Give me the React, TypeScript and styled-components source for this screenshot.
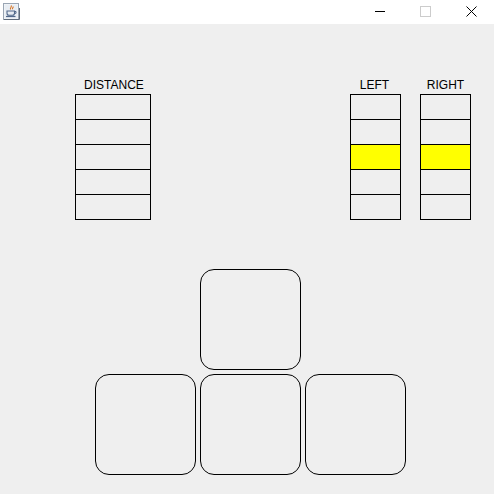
import React from "react";
import styled, { createGlobalStyle } from "styled-components";

const GlobalStyle = createGlobalStyle`
  html, body { margin: 0; padding: 0; background: #efefef; }
  body { font-family: "Liberation Sans", Arial, sans-serif; }
`;

const Frame = styled.div`
  width: 494px;
  height: 494px;
  overflow: hidden;
  display: flex;
  flex-direction: column;
  background: #efefef;
`;

// Window title bar
const TitleBar = styled.div`
  height: 24px;
  flex: none;
  background: #ffffff;
  display: flex;
  align-items: flex-start;
  justify-content: space-between;
`;

const AppIcon = styled.svg`
  width: 17px;
  height: 18px;
  margin: 3px 0 0 3px;
  display: block;
`;

const WindowControls = styled.div`
  display: flex;
  align-items: flex-start;
  padding: 6px 17px 0 0;
  gap: 35px;
`;

const ControlIcon = styled.svg<{ $width?: number }>`
  width: ${(p) => p.$width ?? 11}px;
  height: 11px;
  display: block;
`;

const Meters = styled.div`
  display: flex;
  justify-content: space-between;
  padding: 54px 23px 0 75px;
  height: 146px;
  flex: none;
  box-sizing: content-box;
`;

const MeterGroup = styled.div`
  display: flex;
  gap: 19px;
`;

const Meter = styled.div<{ $width: number }>`
  width: ${(p) => p.$width}px;
  display: flex;
  flex-direction: column;
`;

const MeterLabel = styled.div<{ $nudge: number }>`
  height: 16px;
  font-size: 12px;
  line-height: 14px;
  color: #000000;
  text-align: center;
  white-space: nowrap;
  padding-left: ${(p) => Math.max(p.$nudge, 0)}px;
  padding-right: ${(p) => Math.max(-p.$nudge, 0)}px;
`;

const MeterBox = styled.div`
  border: 1px solid #000000;
  border-bottom: none;
  box-sizing: border-box;
`;

const Cell = styled.div<{ $lit?: boolean }>`
  height: 25px;
  box-sizing: border-box;
  border-bottom: 1px solid #000000;
  background: ${(p) => (p.$lit ? "#ffff00" : "#efefef")};
`;

// Direction pad: one key on top, three below
const Pad = styled.div`
  display: grid;
  grid-template-columns: repeat(3, 101px);
  grid-auto-rows: 101px;
  gap: 4px;
  margin: 45px 0 0 95px;
`;

const PadKey = styled.div<{ $col: number }>`
  grid-column: ${(p) => p.$col};
  box-sizing: border-box;
  border: 1px solid #000000;
  border-radius: 14px;
  background: #efefef;
`;

const MeterColumn = ({
  label,
  width,
  lit,
  nudge = 0,
}: {
  label: string;
  width: number;
  lit?: number;
  nudge?: number;
}) => (
  <Meter $width={width}>
    <MeterLabel $nudge={nudge}>{label}</MeterLabel>
    <MeterBox>
      {[0, 1, 2, 3, 4].map((i) => (
        <Cell key={i} $lit={i === lit} />
      ))}
    </MeterBox>
  </Meter>
);

export default function App() {
  return (
    <>
      <GlobalStyle />
      <Frame>
        <TitleBar>
          <AppIcon viewBox="0 0 17 18">
            <rect x="0.5" y="0.5" width="15" height="16" fill="#f4f6f8" stroke="#9aa5b3" />
            <rect x="1.5" y="1.5" width="13" height="14" fill="#e8edf3" />
            <path d="M8 2.5c1.5 1.4-1.6 2.4-.4 4M10 3.5c.8 1-1.2 1.6-.4 2.8" fill="none" stroke="#d9731f" strokeWidth="1.1" />
            <path d="M4 8h7.5v2.2c0 1.2-1 2-2 2H6c-1 0-2-.8-2-2z" fill="none" stroke="#52698a" strokeWidth="1.1" />
            <path d="M11.5 8.5h1.5v1.8h-1.8" fill="none" stroke="#52698a" />
            <path d="M3 13.5h9.5" stroke="#52698a" strokeWidth="1.2" />
            <path d="M1 16.5h15.5V5" fill="none" stroke="#5f6b7a" strokeWidth="1" />
          </AppIcon>
          <WindowControls>
            <ControlIcon $width={10} viewBox="0 0 10 11">
              <path d="M0 5.5h10" stroke="#000000" strokeWidth="1" />
            </ControlIcon>
            <ControlIcon viewBox="0 0 11 11">
              <rect x="0.5" y="0.5" width="10" height="10" fill="none" stroke="#cccccc" />
            </ControlIcon>
            <ControlIcon viewBox="0 0 11 11">
              <path d="M0.5 0.5l10 10M10.5 0.5l-10 10" stroke="#000000" strokeWidth="1" />
            </ControlIcon>
          </WindowControls>
        </TitleBar>
        <Meters>
          <MeterColumn label="DISTANCE" width={76} nudge={2} />
          <MeterGroup>
            <MeterColumn label="LEFT" width={51} lit={2} nudge={-2} />
            <MeterColumn label="RIGHT" width={51} lit={2} />
          </MeterGroup>
        </Meters>
        <Pad>
          <PadKey $col={2} />
          <PadKey $col={1} />
          <PadKey $col={2} />
          <PadKey $col={3} />
        </Pad>
      </Frame>
    </>
  );
}
